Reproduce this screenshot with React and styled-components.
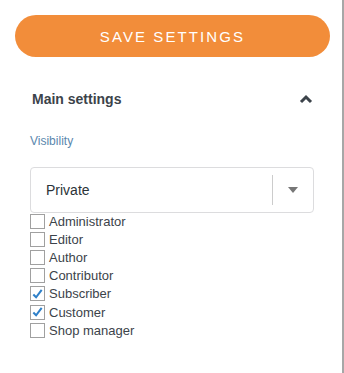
import React, { useState } from "react";
import styled, { createGlobalStyle } from "styled-components";

const GlobalStyle = createGlobalStyle`
  html, body {
    margin: 0;
    padding: 0;
    background: #fff;
    font-family: "Liberation Sans", Arial, sans-serif;
  }
`;

const roles = [
  { name: "Administrator", checked: false },
  { name: "Editor", checked: false },
  { name: "Author", checked: false },
  { name: "Contributor", checked: false },
  { name: "Subscriber", checked: true },
  { name: "Customer", checked: true },
  { name: "Shop manager", checked: false },
];

const App = () => {
  const [items, setItems] = useState(roles);
  const [open, setOpen] = useState(true);

  const toggle = (index) => {
    setItems(items.map((r, i) => (i === index ? { ...r, checked: !r.checked } : r)));
  };

  return (
    <Page>
      <GlobalStyle />
      <Sidebar>
        <SaveButton>SAVE SETTINGS</SaveButton>
        <Section>
          <SectionHeader onClick={() => setOpen(!open)}>
            <SectionTitle>Main settings</SectionTitle>
            <svg width="14" height="10" viewBox="0 0 14 10">
              <path d="M2 8 L7 3 L12 8" fill="none" stroke="#3c434a" strokeWidth="3" />
            </svg>
          </SectionHeader>
          {open && (
            <Body>
              <FieldLabel>Visibility</FieldLabel>
              <Select>
                <SelectValue>Private</SelectValue>
                <SelectDivider />
                <SelectArrow>
                  <svg width="10" height="6" viewBox="0 0 10 6">
                    <path d="M0 0 L10 0 L5 6 Z" fill="#777" />
                  </svg>
                </SelectArrow>
              </Select>
              <RoleList>
                {items.map((role, index) => (
                  <Role key={role.name} onClick={() => toggle(index)}>
                    <Box>
                      {role.checked && (
                        <svg width="14" height="14" viewBox="0 0 14 14">
                          <path d="M2.5 7.5 L5.5 10.5 L11.5 2.5" fill="none" stroke="#2f80c9" strokeWidth="2.2" />
                        </svg>
                      )}
                    </Box>
                    <RoleName>{role.name}</RoleName>
                  </Role>
                ))}
              </RoleList>
            </Body>
          )}
        </Section>
      </Sidebar>
    </Page>
  );
};

export default App;

const Page = styled.div`
  width: 344px;
  height: 373px;
  display: flex;
`;

const Sidebar = styled.div`
  flex: 1;
  height: 100%;
  box-sizing: border-box;
  padding: 15px 12px 0 15px;
  border-right: 3px solid #a7a7a7;
`;

const SaveButton = styled.button`
  display: block;
  width: 315px;
  height: 42px;
  border: none;
  border-radius: 21px;
  background: #f28d3a;
  color: #fff;
  font-family: "Liberation Sans", Arial, sans-serif;
  font-size: 15px;
  letter-spacing: 2.1px;
  cursor: pointer;
  padding: 0;
`;

const Section = styled.div`
  padding: 0 0 0 15px;
  margin-right: 16px;
`;

const SectionHeader = styled.div`
  display: flex;
  align-items: center;
  justify-content: space-between;
  margin-top: 34px;
  padding: 0 1px 0 2px;
  cursor: pointer;
`;

const SectionTitle = styled.div`
  font-size: 14px;
  font-weight: 700;
  color: #3c434a;
`;

const Body = styled.div`
  display: flex;
  flex-direction: column;
`;

const FieldLabel = styled.div`
  margin-top: 27px;
  font-size: 12px;
  color: #5a87ad;
`;

const Select = styled.div`
  display: flex;
  align-items: center;
  height: 46px;
  margin-top: 19px;
  box-sizing: border-box;
  border: 1px solid #dcdcde;
  border-radius: 4px;
  padding-left: 15px;
`;

const SelectValue = styled.div`
  flex: 1;
  font-size: 14px;
  color: #2c3338;
`;

const SelectDivider = styled.div`
  width: 1px;
  height: 30px;
  background: #ccc;
`;

const SelectArrow = styled.div`
  width: 40px;
  display: flex;
  justify-content: center;
`;

const RoleList = styled.div`
  display: flex;
  flex-direction: column;
  margin-top: -1px;
`;

const Role = styled.label`
  display: flex;
  align-items: center;
  height: 18.2px;
  cursor: pointer;
`;

const Box = styled.span`
  width: 15px;
  height: 15px;
  box-sizing: border-box;
  border: 1px solid #a0a0a0;
  background: #fff;
  display: flex;
  align-items: center;
  justify-content: center;
  margin-right: 4px;
`;

const RoleName = styled.span`
  font-size: 13px;
  color: #3c434a;
`;
